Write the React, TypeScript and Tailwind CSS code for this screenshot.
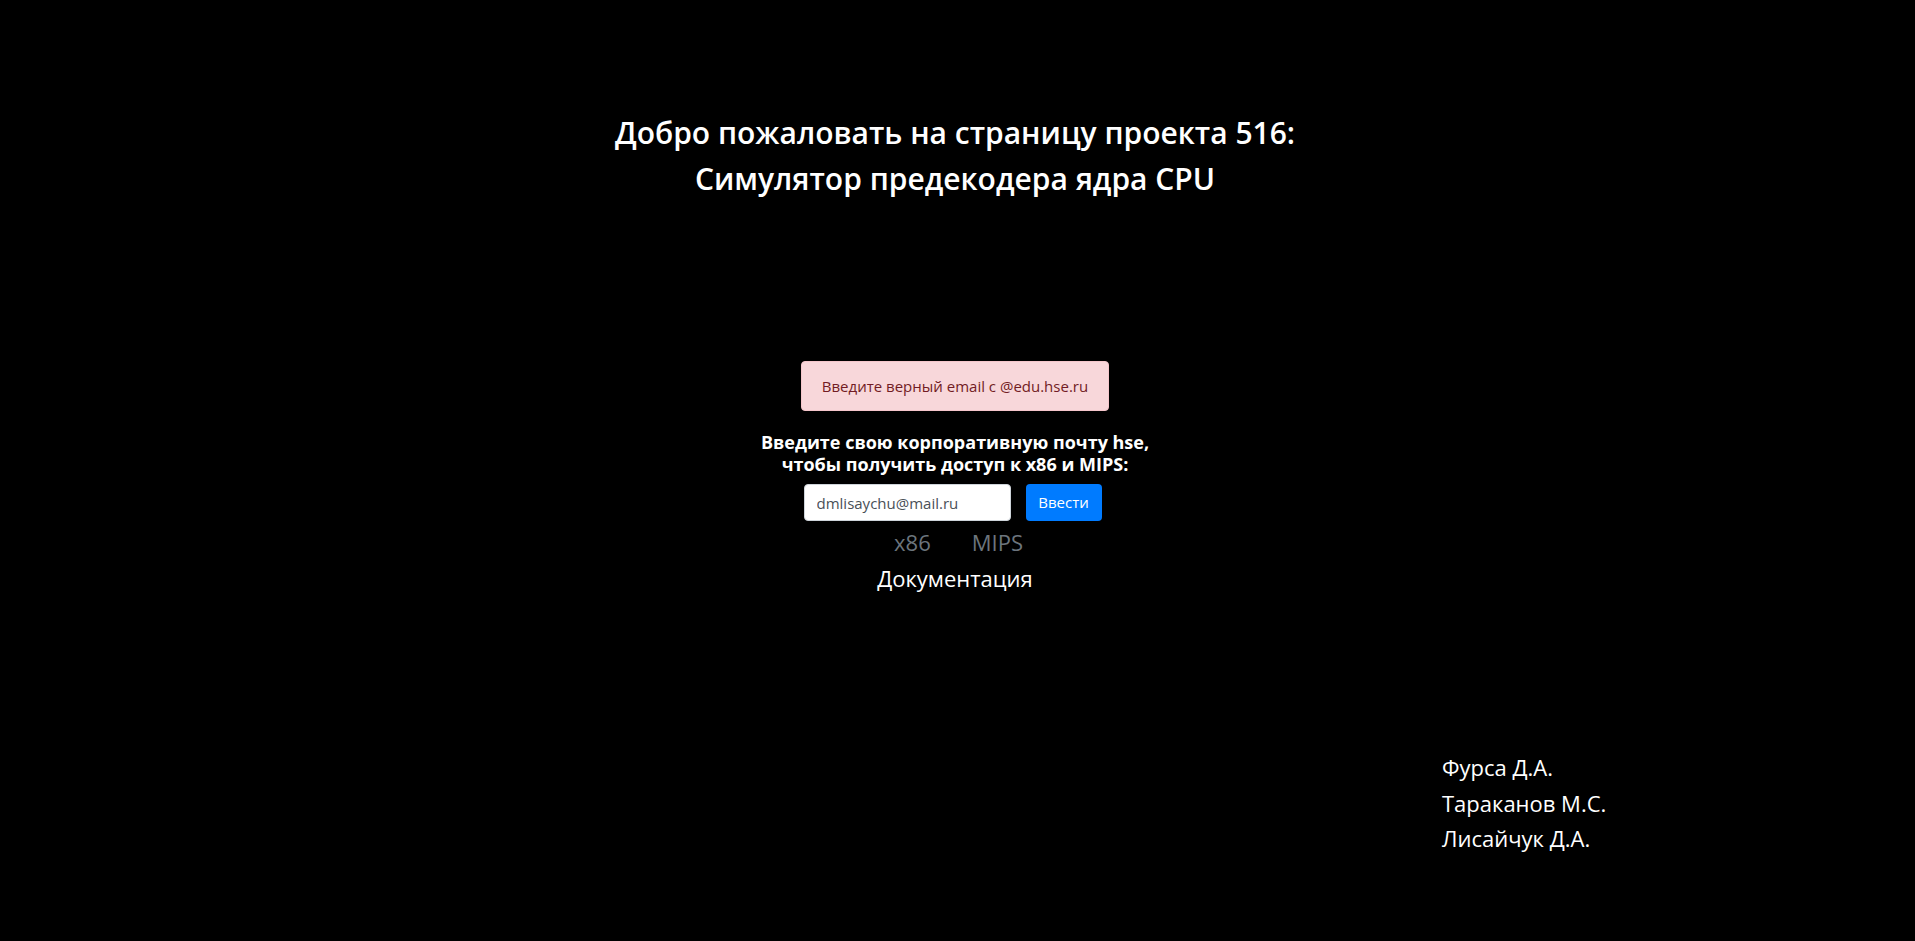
import React from 'react';

const App = () => {
  return (
    <div className="min-h-screen bg-black text-white font-['Open_Sans','Noto_Sans',sans-serif]">
      <main className="flex flex-col items-center pt-[110px] pr-[5px]">
        <h1 className="text-center text-[30px] font-semibold leading-[46px]">
          Добро пожаловать на страницу проекта 516:
          <br />
          Симулятор предекодера ядра CPU
        </h1>

        <div className="mt-[159px] rounded-[4px] border border-[#f5c6cb] bg-[#f8d7da] px-5 py-[13px] text-[15px] leading-[22px] text-[#721c24]">
          Введите верный email с @edu.hse.ru
        </div>

        <p className="mt-[20px] text-center text-[18px] font-bold leading-[22px]">
          Введите свою корпоративную почту hse,
          <br />
          чтобы получить доступ к x86 и MIPS:
        </p>

        <form className="mt-[9px] mr-[5px] flex items-center gap-[15px]" onSubmit={(e) => e.preventDefault()}>
          <input
            type="email"
            defaultValue="dmlisaychu@mail.ru"
            className="h-[37px] w-[207px] rounded-[4px] border border-[#ced4da] bg-white px-[12px] text-[15px] text-[#495057] outline-none"
          />
          <button
            type="submit"
            className="h-[37px] w-[76px] rounded-[4px] bg-[#007bff] text-[15px] text-white"
          >
            Ввести
          </button>
        </form>

        <nav className="mt-[7px] ml-[7px] flex gap-[41px] text-[22px] leading-[28px] text-[#6c757d]">
          <a href="#">x86</a>
          <a href="#">MIPS</a>
        </nav>

        <a href="#" className="mt-[8px] text-[22px] leading-[28px] text-white">
          Документация
        </a>
      </main>

      <div className="ml-[1442px] mt-[158px] flex flex-col text-[22px] leading-[35.5px]">
        <span>Фурса Д.А.</span>
        <span>Тараканов М.С.</span>
        <span>Лисайчук Д.А.</span>
      </div>
    </div>
  );
};

export default App;
